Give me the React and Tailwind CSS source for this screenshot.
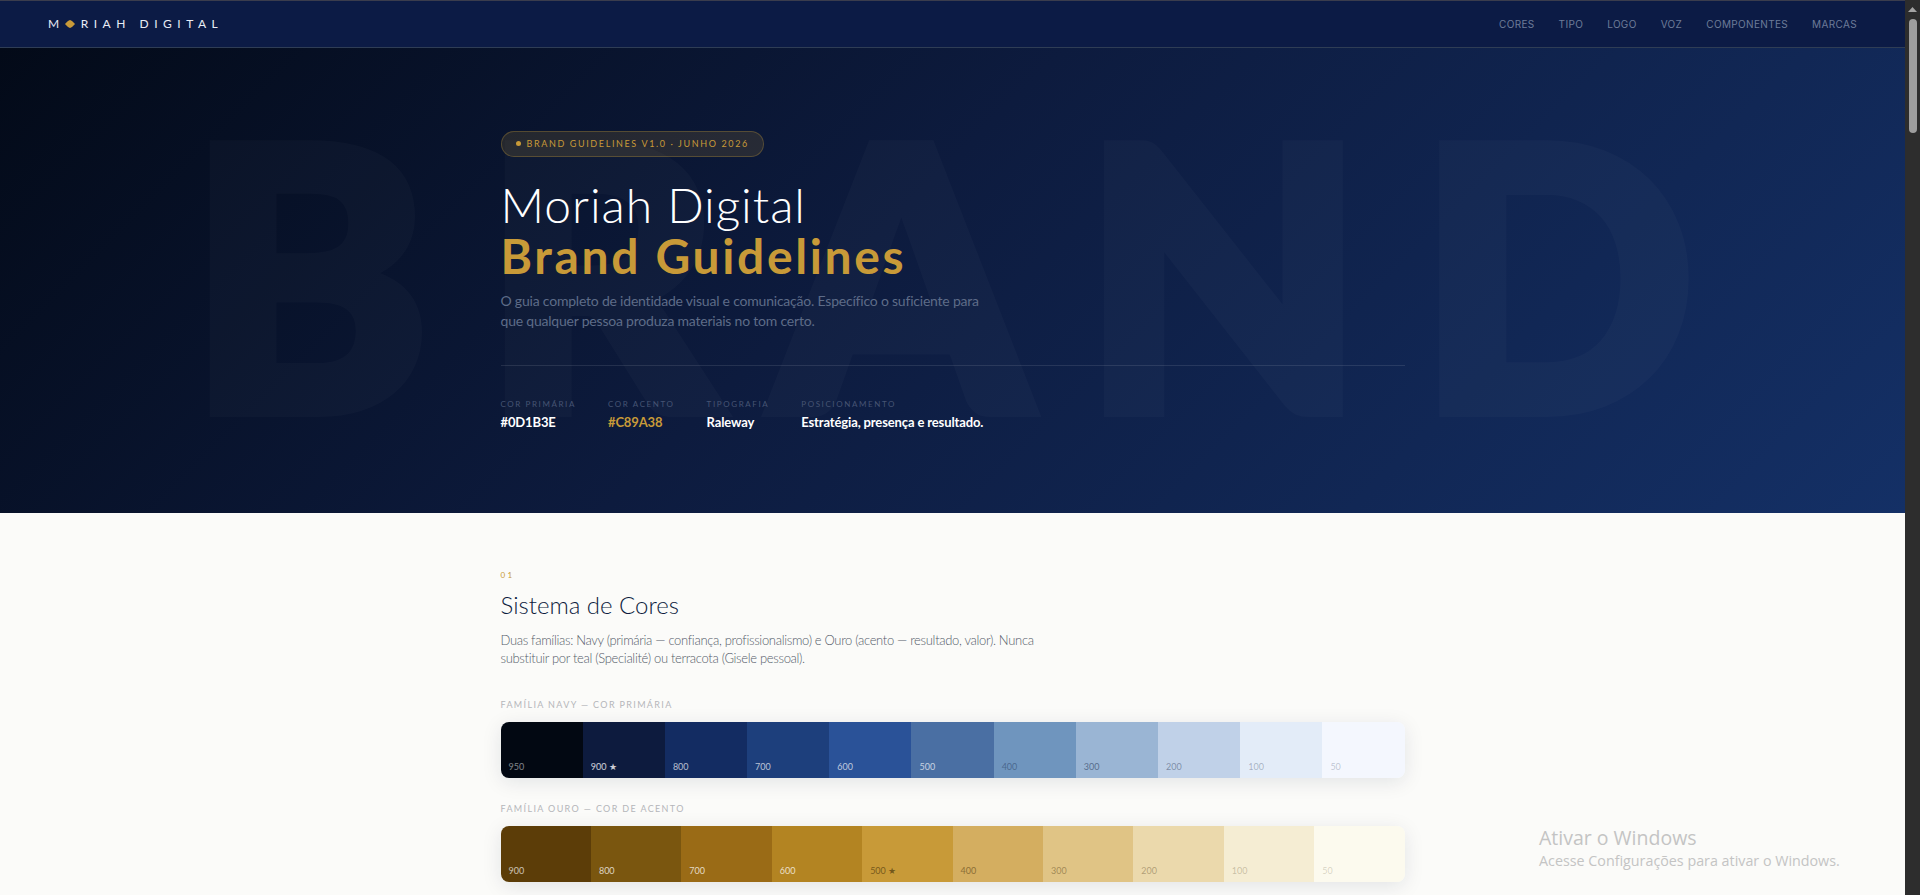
const navLinks = ['CORES', 'TIPO', 'LOGO', 'VOZ', 'COMPONENTES', 'MARCAS']

const stats = [
  { label: 'COR PRIMÁRIA', value: '#0D1B3E', color: 'text-white' },
  { label: 'COR ACENTO', value: '#C89A38', color: 'text-[#C89A38]' },
  { label: 'TIPOGRAFIA', value: 'Raleway', color: 'text-white' },
  { label: 'POSICIONAMENTO', value: 'Estratégia, presença e resultado.', color: 'text-white' },
]

const navy = [
  { name: '950', bg: 'bg-[#020812]', text: 'text-white/50' },
  { name: '900 ★', bg: 'bg-[#0D1B3E]', text: 'text-white/80' },
  { name: '800', bg: 'bg-[#132C62]', text: 'text-white/70' },
  { name: '700', bg: 'bg-[#1D3F7C]', text: 'text-white/70' },
  { name: '600', bg: 'bg-[#2A5298]', text: 'text-white/70' },
  { name: '500', bg: 'bg-[#4A6FA3]', text: 'text-white/70' },
  { name: '400', bg: 'bg-[#6F95BE]', text: 'text-[#0D1B3E]/40' },
  { name: '300', bg: 'bg-[#9AB5D4]', text: 'text-[#0D1B3E]/50' },
  { name: '200', bg: 'bg-[#C0D1E8]', text: 'text-[#0D1B3E]/40' },
  { name: '100', bg: 'bg-[#E3ECF8]', text: 'text-[#0D1B3E]/30' },
  { name: '50', bg: 'bg-[#F4F7FE]', text: 'text-[#0D1B3E]/25' },
]

const gold = [
  { name: '900', bg: 'bg-[#5C3D08]', text: 'text-white/70' },
  { name: '800', bg: 'bg-[#7A560F]', text: 'text-white/75' },
  { name: '700', bg: 'bg-[#9A6B16]', text: 'text-white/75' },
  { name: '600', bg: 'bg-[#B38422]', text: 'text-white/75' },
  { name: '500 ★', bg: 'bg-[#C89A38]', text: 'text-[#3a2a08]/60' },
  { name: '400', bg: 'bg-[#D4AE60]', text: 'text-[#3a2a08]/50' },
  { name: '300', bg: 'bg-[#E0C485]', text: 'text-[#3a2a08]/40' },
  { name: '200', bg: 'bg-[#EBD9AC]', text: 'text-[#3a2a08]/35' },
  { name: '100', bg: 'bg-[#F5EDD3]', text: 'text-[#3a2a08]/25' },
  { name: '50', bg: 'bg-[#FCFAEE]', text: 'text-[#3a2a08]/20' },
]

function Palette({ label, colors }) {
  return (
    <div className="mb-[24px]">
      <div className="mb-[10px] text-[9px] leading-[14px] tracking-[0.15em] text-[#b5b6ba]">{label}</div>
      <div className="flex h-[56px] overflow-hidden rounded-[8px] shadow-[0_4px_20px_rgba(13,27,62,0.1)]">
        {colors.map((c) => (
          <div key={c.name} className={`flex flex-1 items-end px-[8px] pb-[4px] ${c.bg}`}>
            <span className={`text-[9px] leading-[14px] ${c.text}`}>{c.name}</span>
          </div>
        ))}
      </div>
    </div>
  )
}

export default function App() {
  return (
    <div className="flex h-[895px] overflow-hidden bg-[#2d2d2d] font-['Lato',sans-serif]">
      <div className="relative min-w-0 flex-1 overflow-hidden bg-[#FBFBF9]">
        <nav className="flex h-[48px] items-center justify-between border-t border-b border-t-[#3b3d4d] border-b-[#2f3d55] bg-[#0C1B45] pr-[48px] pl-[48px]">
          <div className="flex items-center text-[12px] leading-none tracking-[0.46em] text-[#e8ecf5]">
            <span>M</span>
            <svg className="mr-[6px]" width="10" height="8" viewBox="0 0 10 8">
              <path d="M0 4 C2 1.5 3.5 0.5 5 0 C6.5 0.5 8 1.5 10 4 C8 6.5 6.5 7.5 5 8 C3.5 7.5 2 6.5 0 4Z" fill="#C89A38" />
            </svg>
            <span>RIAH DIGITAL</span>
          </div>
          <div className="flex gap-[24px] font-['Inter',sans-serif] text-[10px] tracking-[0.035em] text-[#6d7b99]">
            {navLinks.map((link) => (
              <span key={link}>{link}</span>
            ))}
          </div>
        </nav>

        <header className="relative h-[465px] overflow-hidden bg-[linear-gradient(135deg,#030A18_0%,#0D1B3E_45%,#143066_100%)]">
          <div className="absolute top-[-10px] left-[188px] text-[365px] leading-[465px] font-black tracking-[0.145em] whitespace-nowrap text-white opacity-[0.02] [-webkit-text-stroke:12px_white]">
            BRAND
          </div>
          <div className="relative mx-auto max-w-[1000px] px-[48px] pt-[80px]">
            <div className="inline-flex h-[26px] items-center gap-[6px] rounded-full border border-[#C89A38]/30 bg-[#C89A38]/15 px-[14px] text-[9px] tracking-[0.18em] text-[#C89A38]">
              <span className="h-[5px] w-[5px] rounded-full bg-[#C89A38]" />
              BRAND GUIDELINES V1.0 · JUNHO 2026
            </div>
            <h1 className="mt-[22px] text-[48px] leading-[51px]">
              <span className="block font-light tracking-[0.02em] text-white">Moriah Digital</span>
              <span className="block font-bold tracking-[0.055em] text-[#C89A38]">Brand Guidelines</span>
            </h1>
            <p className="mt-[10px] w-[500px] text-[14px] leading-[20px] tracking-[-0.015em] text-[#5e6c88]">
              O guia completo de identidade visual e comunicação. Específico o suficiente para que qualquer pessoa produza materiais no tom certo.
            </p>
            <div className="mt-[34px] flex gap-[32px] border-t border-white/10 pt-[31px]">
              {stats.map((s) => (
                <div key={s.label}>
                  <div className="text-[8px] leading-[14px] tracking-[0.2em] text-[#465473]">{s.label}</div>
                  <div className={`mt-[2px] text-[13px] leading-[18px] font-bold tracking-[-0.01em] ${s.color}`}>{s.value}</div>
                </div>
              ))}
            </div>
          </div>
        </header>

        <main className="mx-auto max-w-[1000px] px-[48px] pt-[56px]">
          <div className="text-[8px] leading-[12px] tracking-[0.3em] text-[#C89A38]">01</div>
          <h2 className="mt-[8px] text-[24px] leading-[32px] font-light text-[#0D1B3E]">Sistema de Cores</h2>
          <p className="mt-[10px] w-[560px] text-[13px] leading-[18px] font-light tracking-[-0.025em] text-[#555c6a]">
            Duas famílias: Navy (primária — confiança, profissionalismo) e Ouro (acento — resultado, valor). Nunca substituir por teal (Specialité) ou terracota (Gisele pessoal).
          </p>
          <div className="mt-[31px]">
            <Palette label="FAMÍLIA NAVY — COR PRIMÁRIA" colors={navy} />
            <Palette label="FAMÍLIA OURO — COR DE ACENTO" colors={gold} />
          </div>
        </main>

        <div className="absolute top-[825px] left-[1539px] font-['Open_Sans',sans-serif] whitespace-nowrap text-[#c4c4c4]">
          <div className="text-[19.5px] leading-[26px]">Ativar o Windows</div>
          <div className="text-[14.3px] leading-[20px]">Acesse Configurações para ativar o Windows.</div>
        </div>
      </div>

      <div className="flex w-[15px] flex-col items-center bg-[#2d2d2d] pt-[7px]">
        <svg width="9" height="5" viewBox="0 0 9 5">
          <path d="M4.5 0 L9 5 L0 5Z" fill="#a3a3a3" />
        </svg>
        <div className="mt-[7px] h-[114px] w-[8px] rounded-full bg-[#9e9e9e]" />
      </div>
    </div>
  )
}
